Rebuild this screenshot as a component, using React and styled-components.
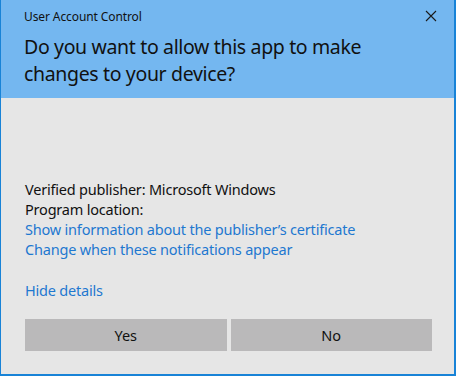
import React from 'react';
import styled, { createGlobalStyle } from 'styled-components';

const GlobalStyle = createGlobalStyle`
  html, body {
    margin: 0;
    padding: 0;
    background: #e6e6e6;
  }
  body {
    font-family: "Segoe UI", "Noto Sans", "Liberation Sans", sans-serif;
  }
`;

function App() {
  return (
    <>
      <GlobalStyle />
      <Window>
        <Header>
          <TitleBar>
            <Title>User Account Control</Title>
            <Close aria-label="Close">
              <svg width="12" height="12" viewBox="0 0 12 12">
                <path d="M1 1 L11 11 M11 1 L1 11" stroke="#1a1a1a" strokeWidth="1.1" />
              </svg>
            </Close>
          </TitleBar>
          <Question>Do you want to allow this app to make changes to your device?</Question>
        </Header>
        <Body>
          <Details>
            <Line>Verified publisher: Microsoft Windows</Line>
            <Line>Program location:</Line>
            <Link>Show information about the publisher’s certificate</Link>
            <Link>Change when these notifications appear</Link>
          </Details>
          <Toggle>Hide details</Toggle>
          <Buttons>
            <Button>Yes</Button>
            <Button>No</Button>
          </Buttons>
        </Body>
      </Window>
    </>
  );
}

export default App;

const Window = styled.div`
  width: 456px;
  height: 376px;
  box-sizing: border-box;
  border: 1px solid #1883d7;
  border-top: none;
  border-right-width: 2px;
  border-bottom-width: 2px;
  display: flex;
  flex-direction: column;
  background: #e6e6e6;
`;

const Header = styled.div`
  height: 98px;
  background: #74b7f0;
  padding: 0 0 0 23px;
  box-sizing: border-box;
`;

const TitleBar = styled.div`
  display: flex;
  align-items: center;
  justify-content: space-between;
  height: 33px;
`;

const Title = styled.div`
  font-size: 12px;
  color: #111;
  margin-top: -1px;
  letter-spacing: -0.1px;
`;

const Close = styled.div`
  width: 46px;
  height: 33px;
  display: flex;
  align-items: center;
  justify-content: center;
  margin-top: -1px;
`;

const Question = styled.div`
  font-size: 19.5px;
  line-height: 27px;
  letter-spacing: -0.35px;
  color: #111;
  width: 380px;
`;

const Body = styled.div`
  flex: 1;
  padding: 0 22px 0 24px;
  display: flex;
  flex-direction: column;
`;

const Details = styled.div`
  margin-top: 81px;
  display: flex;
  flex-direction: column;
`;

const Line = styled.div`
  font-size: 14.5px;
  line-height: 20px;
  letter-spacing: -0.2px;
  color: #111;
`;

const Link = styled(Line)`
  color: #1e78d0;
`;

const Toggle = styled(Link)`
  margin-top: 21px;
`;

const Buttons = styled.div`
  margin-top: 19px;
  display: grid;
  grid-template-columns: 1fr 1fr;
  gap: 4px;
`;

const Button = styled.div`
  height: 32px;
  background: #bab9ba;
  display: flex;
  align-items: center;
  justify-content: center;
  font-size: 14.5px;
  color: #111;
`;
